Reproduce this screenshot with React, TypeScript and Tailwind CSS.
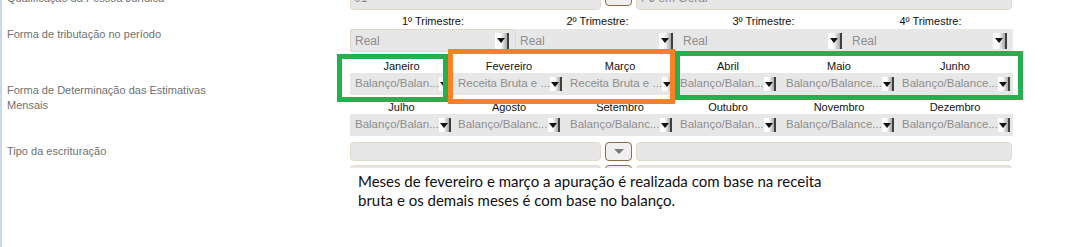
const meses1 = [
  { nome: 'Janeiro', valor: 'Balanço/Balan...', w: 'w-[103px]', pr: 'pr-[8px]' },
  { nome: 'Fevereiro', valor: 'Receita Bruta e ...', w: 'w-[112px]', pr: 'pr-[5px]' },
  { nome: 'Março', valor: 'Receita Bruta e ...', w: 'w-[110px]', pr: 'pr-[5px]' },
  { nome: 'Abril', valor: 'Balanço/Balan...', w: 'w-[106px]', pr: 'pr-[5px]' },
  { nome: 'Maio', valor: 'Balanço/Balance...', w: 'w-[116px]', pr: 'pr-[5px]' },
  { nome: 'Junho', valor: 'Balanço/Balance...', w: 'w-[116px]', pr: 'pr-[6px]' },
];

const meses2 = [
  { nome: 'Julho', valor: 'Balanço/Balan...', w: 'w-[103px]', pr: 'pr-[8px]' },
  { nome: 'Agosto', valor: 'Balanço/Balanc...', w: 'w-[112px]', pr: 'pr-[5px]' },
  { nome: 'Setembro', valor: 'Balanço/Balanc...', w: 'w-[110px]', pr: 'pr-[5px]' },
  { nome: 'Outubro', valor: 'Balanço/Balan...', w: 'w-[106px]', pr: 'pr-[5px]' },
  { nome: 'Novembro', valor: 'Balanço/Balance...', w: 'w-[116px]', pr: 'pr-[5px]' },
  { nome: 'Dezembro', valor: 'Balanço/Balance...', w: 'w-[116px]', pr: 'pr-[6px]' },
];

const trimestres = [
  { nome: '1º Trimestre:', w: 'w-[166px]', borda: true },
  { nome: '2º Trimestre:', w: 'w-[163px]', borda: false },
  { nome: '3º Trimestre:', w: 'w-[169px]', borda: false },
  { nome: '4º Trimestre:', w: 'w-[165px]', borda: false },
];

function Seta({ small }: { small?: boolean }) {
  return (
    <span
      className={
        'flex shrink-0 items-center justify-center border-r-2 border-[#3f3f3f] bg-linear-to-r from-white from-45% to-[#a9a9a9] ' +
        (small ? 'h-[14px] w-[12px]' : 'h-[16px] w-[14px]')
      }
    >
      <span className="h-0 w-0 border-x-[4px] border-t-[5px] border-x-transparent border-t-[#111]" />
    </span>
  );
}

function Botao() {
  return (
    <div className="flex h-[19px] w-[27px] items-center justify-center rounded-[4px] border border-[#8d6b47] bg-[#efefef]">
      <span className="h-0 w-0 border-x-[5px] border-t-[5px] border-x-transparent border-t-[#7a7a7a]" />
    </div>
  );
}

function LinhaCampos({ a, b, alto }: { a?: string; b?: string; alto: string }) {
  return (
    <div className="flex gap-[4px]">
      <div className={'flex w-[251px] items-center rounded-[4px] border border-[#e3d9c9] bg-[#e7e7e7] pl-[3px] text-[12px] text-[#8e8e8e] ' + alto}>
        {a}
      </div>
      <Botao />
      <div className={'flex w-[376px] items-center rounded-[4px] border border-[#e3d9c9] bg-[#e7e7e7] pl-[4px] text-[12px] text-[#8e8e8e] ' + alto}>
        {b}
      </div>
    </div>
  );
}

function Meses({ lista, primeira }: { lista: typeof meses1; primeira?: boolean }) {
  return (
    <div>
      <div className={'flex leading-[14px] text-[11px] text-[#111] ' + (primeira ? 'h-[21px] pt-[7px]' : 'h-[19px] pt-[5px]')}>
        {lista.map((m) => (
          <div key={m.nome} className={'text-center ' + m.w}>{m.nome}</div>
        ))}
      </div>
      <div className="flex h-[22px] bg-[#e7e7e7]">
        {lista.map((m) => (
          <div key={m.nome} className={'flex items-center justify-between pl-[5px] text-[11.5px] text-[#8e8e8e] ' + m.w + ' ' + m.pr}>
            <span className="whitespace-nowrap">{m.valor}</span>
            <Seta small />
          </div>
        ))}
      </div>
    </div>
  );
}

export default function App() {
  return (
    <div className="relative h-[247px] w-[1076px] overflow-hidden border-l-2 border-[#c9d8ec] bg-white font-['Liberation_Sans',Arial,sans-serif]">
      {/* Qualificação */}
      <div className="mt-[-14px] flex h-[24px] items-center">
        <div className="w-[348px] pl-[5px] text-[11px] text-[#707070]">Qualificação da Pessoa Jurídica</div>
        <LinhaCampos a="01" b="PJ em Geral" alto="h-[23px]" />
      </div>

      {/* Forma de tributação */}
      <div className="flex">
        <div className="w-[348px] pl-[5px] pt-[17px] text-[11px] leading-[14px] text-[#707070]">Forma de tributação no período</div>
        <div>
          <div className="flex h-[18px] pt-[4px] text-[11px] leading-[14px] text-[#111]">
            {trimestres.map((t) => (
              <div key={t.nome} className={'text-center ' + t.w}>{t.nome}</div>
            ))}
          </div>
          <div className="mt-[1px] flex h-[23px] bg-[#e7e7e7]">
            {trimestres.map((t) => (
              <div
                key={t.nome}
                className={
                  'flex items-center justify-between pl-[4px] pr-[6px] text-[12px] text-[#8e8e8e] ' +
                  t.w +
                  (t.borda ? ' rounded-[4px] border border-[#e0d7c8]' : '')
                }
              >
                <span>Real</span>
                <Seta />
              </div>
            ))}
          </div>
        </div>
      </div>

      {/* Estimativas mensais */}
      <div className="flex">
        <div className="w-[348px] pl-[5px] pt-[31px] text-[11px] leading-[15px] text-[#707070]">
          Forma de Determinação das Estimativas
          <br />
          Mensais
        </div>
        <div>
          <Meses lista={meses1} primeira />
          <Meses lista={meses2} />
        </div>
      </div>

      {/* Tipo da escrituração */}
      <div className="mt-[6px] flex h-[19px] items-center">
        <div className="w-[348px] pl-[5px] text-[11px] text-[#707070]">Tipo da escrituração</div>
        <LinhaCampos alto="h-[19px]" />
      </div>

      <div className="mt-[4px] flex h-[3px] overflow-hidden">
        <div className="w-[348px]" />
        <LinhaCampos alto="h-[19px]" />
      </div>

      {/* Observação */}
      <div className="flex">
        <div className="w-[348px]" />
        <p className="pl-[8px] pt-[4px] font-['Lato',sans-serif] text-[15px] leading-[19px] text-[#111]">
          Meses de fevereiro e março a apuração é realizada com base na receita
          <br />
          bruta e os demais meses é com base no balanço.
        </p>
      </div>

      {/* marcações */}
      <div className="absolute left-[335px] top-[54px] h-[48px] w-[111px] border-[5px] border-[#22b14c]" />
      <div className="absolute left-[446px] top-[49px] h-[55px] w-[227px] border-[5px] border-[#ff7f27]" />
      <div className="absolute left-[673px] top-[51px] h-[49px] w-[348px] border-[5px] border-[#22b14c]" />
    </div>
  );
}
